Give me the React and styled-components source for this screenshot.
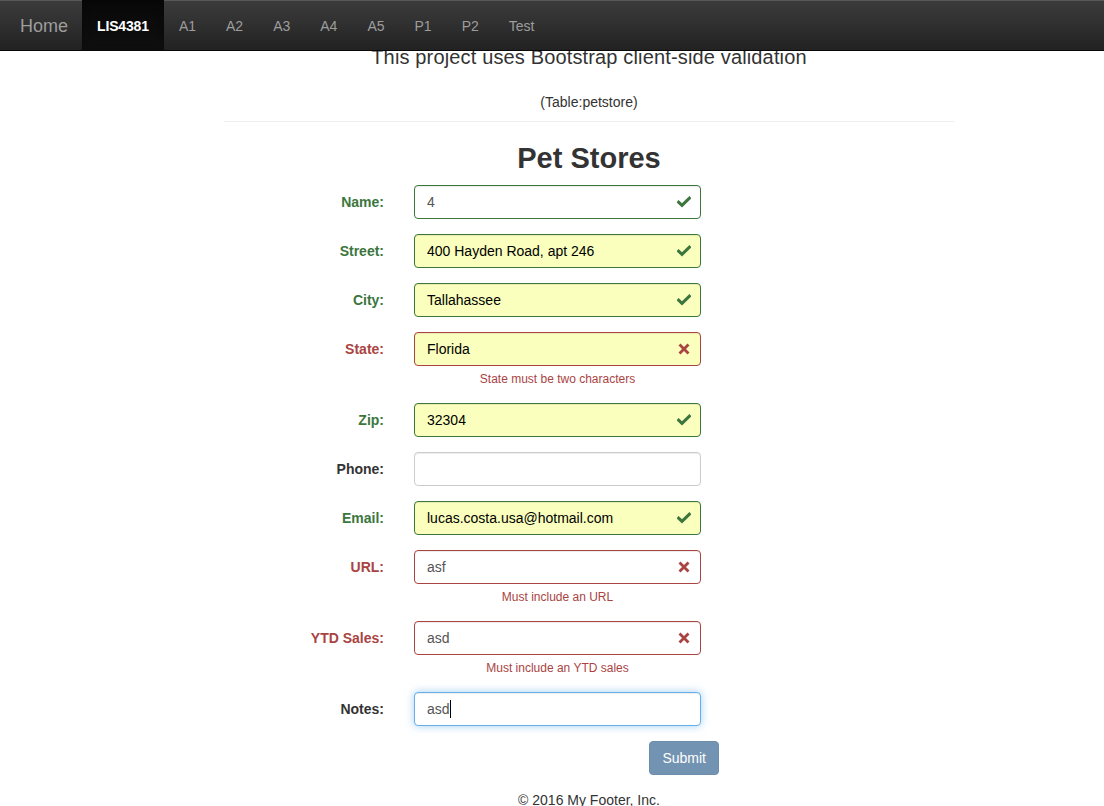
import React from "react";
import styled, { createGlobalStyle } from "styled-components";

const GlobalStyle = createGlobalStyle`
  html, body { margin: 0; padding: 0; background: #fff; }
  body {
    font-family: "Liberation Sans", Arial, sans-serif;
    font-size: 14px;
    line-height: 20px;
    color: #333;
  }
  * { box-sizing: border-box; }
`;

const NavBar = styled.nav`
  position: fixed;
  top: 0;
  left: 0;
  right: 0;
  z-index: 10;
  height: 51px;
  display: flex;
  align-items: stretch;
  background: linear-gradient(to bottom, #3c3c3c 0%, #222 100%);
  border-bottom: 1px solid #080808;
  box-shadow: inset 0 1px 0 rgba(255, 255, 255, 0.15);
`;

const Brand = styled.a`
  display: flex;
  align-items: center;
  padding: 2px 14px 0 20px;
  font-size: 18px;
  color: #9d9d9d;
  text-decoration: none;
`;

const NavItem = styled.a`
  display: flex;
  align-items: center;
  padding: 2px 15px 0;
  font-size: 14px;
  text-decoration: none;
  letter-spacing: ${(p) => (p.$active ? "-0.15px" : "0")};
  color: ${(p) => (p.$active ? "#fff" : "#9d9d9d")};
  font-weight: ${(p) => (p.$active ? "bold" : "normal")};
  background: ${(p) =>
    p.$active ? "linear-gradient(to bottom, #080808 0%, #0f0f0f 100%)" : "transparent"};
  box-shadow: ${(p) => (p.$active ? "inset 0 3px 9px rgba(0,0,0,.25)" : "none")};
`;

const Page = styled.main`
  padding-top: 46px;
`;

const Container = styled.div`
  width: 730px;
  margin-left: 224px;
  display: flex;
  flex-direction: column;
`;

const Intro = styled.p`
  margin: 0;
  font-size: 20px;
  line-height: 22px;
  font-weight: 300;
  letter-spacing: 0.15px;
  text-align: center;
  color: #333;
`;

const TableNote = styled.p`
  margin: 24px 0 0;
  text-align: center;
  font-size: 14px;
  line-height: 20px;
`;

const Divider = styled.hr`
  margin: 9px 0 0;
  border: 0;
  border-top: 1px solid #eee;
`;

const Title = styled.h2`
  margin: 20px 0 0;
  font-size: 29px;
  line-height: 33px;
  font-weight: bold;
  text-align: center;
  color: #333;
`;

const Form = styled.form`
  margin-top: 10px;
  display: flex;
  flex-direction: column;
`;

const Group = styled.div`
  display: grid;
  grid-template-columns: 160px 287px;
  column-gap: 30px;
  margin-bottom: 15px;
`;

const colors = {
  success: "#3c763d",
  error: "#a94442",
  none: "#333",
};

const Label = styled.label`
  text-align: right;
  font-weight: bold;
  font-size: 14px;
  line-height: 20px;
  padding-top: 7px;
  color: ${(p) => colors[p.$state]};
`;

const Field = styled.div`
  position: relative;
  display: flex;
  flex-direction: column;
`;

const Input = styled.input`
  width: 287px;
  height: 34px;
  padding: 6px 34px 6px 12px;
  font-family: "Liberation Sans", Arial, sans-serif;
  font-size: 14px;
  line-height: 20px;
  border-radius: 4px;
  outline: none;
  color: ${(p) => (p.$autofill ? "#000" : "#555")};
  background: ${(p) => (p.$autofill ? "#faffbd" : "#fff")};
  border: 1px solid
    ${(p) =>
      p.$focus
        ? "#66afe9"
        : p.$state === "success"
        ? "#3c763d"
        : p.$state === "error"
        ? "#a94442"
        : "#ccc"};
  box-shadow: ${(p) =>
    p.$focus
      ? "inset 0 1px 1px rgba(0,0,0,.075), 0 0 8px rgba(102,175,233,.6)"
      : "inset 0 1px 1px rgba(0,0,0,.075)"};
`;

const Feedback = styled.span`
  position: absolute;
  top: 0;
  right: 0;
  width: 34px;
  height: 34px;
  display: flex;
  align-items: center;
  justify-content: center;
  pointer-events: none;
  color: ${(p) => colors[p.$state]};
`;

const Caret = styled.span`
  position: absolute;
  top: 8px;
  left: 36px;
  width: 1px;
  height: 18px;
  background: #000;
`;

const Help = styled.span`
  display: block;
  margin-top: 5px;
  font-size: 12px;
  line-height: 17px;
  text-align: center;
  color: #a94442;
`;

const ButtonRow = styled.div`
  display: flex;
  justify-content: flex-end;
  width: 495px;
`;

const SubmitButton = styled.button`
  height: 34px;
  padding: 6px 12px;
  font-family: "Liberation Sans", Arial, sans-serif;
  font-size: 14px;
  line-height: 20px;
  color: #fff;
  background: #7293b1;
  border: 1px solid #6c8eac;
  border-radius: 4px;
  cursor: not-allowed;
`;

const Footer = styled.footer`
  margin-top: 15px;
  text-align: center;
  font-size: 14px;
  line-height: 20px;
`;

const OkIcon = () => (
  <svg width="14" height="12" viewBox="0 0 14 12" aria-hidden="true">
    <polyline
      points="1.6,6.2 5,9.4 12.4,2.2"
      fill="none"
      stroke="currentColor"
      strokeWidth="3"
      strokeLinecap="square"
    />
  </svg>
);

const RemoveIcon = () => (
  <svg width="12" height="12" viewBox="0 0 12 12" aria-hidden="true">
    <path
      d="M2.5 2.5 L9.5 9.5 M9.5 2.5 L2.5 9.5"
      fill="none"
      stroke="currentColor"
      strokeWidth="2.8"
      strokeLinecap="square"
    />
  </svg>
);

const fields = [
  { label: "Name:", value: "4", state: "success" },
  { label: "Street:", value: "400 Hayden Road, apt 246", state: "success", autofill: true },
  { label: "City:", value: "Tallahassee", state: "success", autofill: true },
  { label: "State:", value: "Florida", state: "error", autofill: true, help: "State must be two characters" },
  { label: "Zip:", value: "32304", state: "success", autofill: true },
  { label: "Phone:", value: "", state: "none" },
  { label: "Email:", value: "lucas.costa.usa@hotmail.com", state: "success", autofill: true },
  { label: "URL:", value: "asf", state: "error", help: "Must include an URL" },
  { label: "YTD Sales:", value: "asd", state: "error", help: "Must include an YTD sales" },
  { label: "Notes:", value: "asd", state: "none", focus: true },
];

const navItems = ["LIS4381", "A1", "A2", "A3", "A4", "A5", "P1", "P2", "Test"];

export default function App() {
  return (
    <>
      <GlobalStyle />
      <NavBar>
        <Brand href="#">Home</Brand>
        {navItems.map((n) => (
          <NavItem key={n} href="#" $active={n === "LIS4381"}>
            {n}
          </NavItem>
        ))}
      </NavBar>
      <Page>
        <Container>
          <Intro>This project uses Bootstrap client-side validation</Intro>
          <TableNote>(Table:petstore)</TableNote>
          <Divider />
          <Title>Pet Stores</Title>
          <Form onSubmit={(e) => e.preventDefault()}>
            {fields.map((f) => (
              <Group key={f.label}>
                <Label $state={f.state}>{f.label}</Label>
                <Field>
                  <Input
                    readOnly
                    value={f.value}
                    $state={f.state}
                    $autofill={f.autofill}
                    $focus={f.focus}
                  />
                  {f.focus && <Caret />}
                  {f.state !== "none" && (
                    <Feedback $state={f.state}>
                      {f.state === "success" ? <OkIcon /> : <RemoveIcon />}
                    </Feedback>
                  )}
                  {f.help && <Help>{f.help}</Help>}
                </Field>
              </Group>
            ))}
            <ButtonRow>
              <SubmitButton type="submit" disabled>
                Submit
              </SubmitButton>
            </ButtonRow>
          </Form>
          <Footer>© 2016 My Footer, Inc.</Footer>
        </Container>
      </Page>
    </>
  );
}
